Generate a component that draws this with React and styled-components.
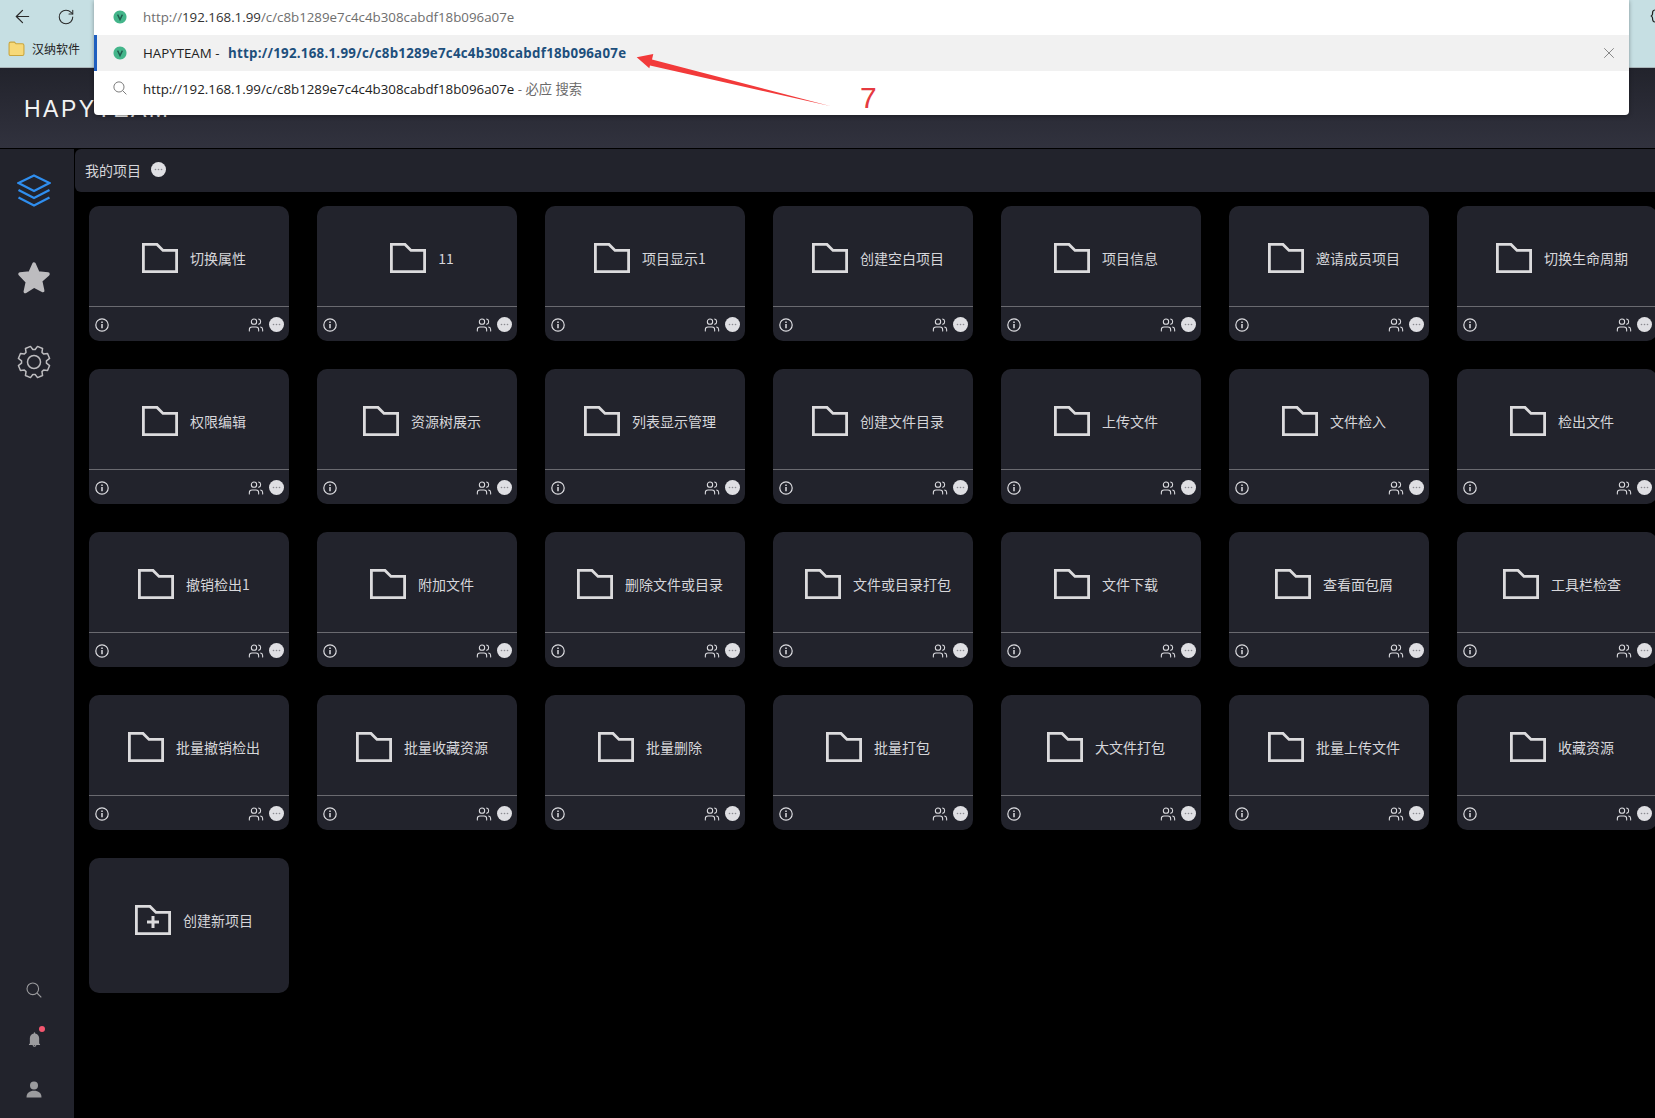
import React from "react";
import styled, { createGlobalStyle } from "styled-components";
import { ArrowLeft, RotateCw, Users, X } from "lucide-react";
import { AiFillBell } from "react-icons/ai";

const Global = createGlobalStyle`
html, body {
    margin: 0;
    padding: 0;
    background: #000;
    overflow: hidden;
}
* { box-sizing: border-box; }
`

const Page = styled.div`
position: relative;
width: 1655px;
height: 1118px;
overflow: hidden;
display: flex;
flex-direction: column;
background: #000;
font-family: "Noto Sans CJK SC", "Noto Sans", sans-serif;
`

// browser chrome
const BrowserBar = styled.div`
height: 68px;
flex-shrink: 0;
background: #c6dfe3;
border-bottom: 1px solid #a9b4b8;
display: flex;
flex-direction: column;
`
const NavRow = styled.div`
height: 33px;
display: flex;
align-items: center;
gap: 24px;
padding-left: 12px;
color: #2a2a2a;
`
const Bookmarks = styled.div`
height: 30px;
display: flex;
align-items: center;
gap: 7px;
padding-left: 8px;
font-size: 12px;
color: #222;
`
const CutIcon = styled.svg`
position: absolute;
right: 0;
top: 9px;
`

// omnibox dropdown
const Dropdown = styled.div`
position: absolute;
left: 94px;
top: 0;
width: 1535px;
height: 115px;
background: #fff;
border-radius: 0 0 4px 4px;
box-shadow: 0 1px 4px rgba(0, 0, 0, .35);
display: flex;
flex-direction: column;
font-family: "Open Sans", sans-serif;
font-size: 13.3px;
z-index: 2;
`
const Suggestion = styled.div`
height: ${p => p.$h}px;
padding: 0 0 ${p => p.$pb || 0}px 16px;
display: flex;
align-items: center;
gap: 16px;
color: ${p => p.$color || "#222"};
background: ${p => p.$active ? "#f1f1f1" : "transparent"};
border-left: ${p => p.$active ? "3px solid #1f5fbf" : "3px solid transparent"};
position: relative;
white-space: pre;
`
const Dark = styled.span`
color: #333;
`
const Strong = styled.span`
color: #1d4f7c;
font-weight: 700;
letter-spacing: .26px;
margin-left: 5px;
`
const Gray = styled.span`
color: #6a6a6a;
font-family: "Open Sans", "Noto Sans CJK SC", sans-serif;
`
const CloseBtn = styled.span`
position: absolute;
right: 11px;
top: 9px;
color: #666;
display: flex;
`
const Callout = styled.svg`
position: absolute;
left: 630px;
top: 50px;
z-index: 3;
`
const Seven = styled.span`
position: absolute;
left: 860px;
top: 79px;
font-family: "Liberation Sans", sans-serif;
font-size: 30px;
line-height: 38px;
color: #e53a40;
z-index: 3;
`

// app
const Header = styled.div`
height: 81px;
flex-shrink: 0;
background: linear-gradient(180deg, #22232c 0%, #31323e 100%);
border-bottom: 1px solid #000;
display: flex;
align-items: center;
padding: 0 0 0 24px;
`
const Brand = styled.div`
font-family: "Liberation Sans", sans-serif;
font-size: 23px;
letter-spacing: 2.5px;
color: #f2f2f2;
margin-top: 3px;
`
const Body = styled.div`
flex: 1;
display: flex;
min-height: 0;
`
const Sidebar = styled.div`
width: 74px;
flex-shrink: 0;
background: #22232c;
display: flex;
flex-direction: column;
align-items: center;
padding: 24px 6px 0 0;
`
const BigIcon = styled.div`
width: 34px;
height: 34px;
margin-top: ${p => p.$top || 0}px;
display: flex;
align-items: center;
justify-content: center;
`
const SmallIcons = styled.div`
margin-top: auto;
padding-bottom: 20px;
display: flex;
flex-direction: column;
align-items: center;
gap: 33px;
color: #9b9b9e;
`
const SmallIcon = styled.div`
position: relative;
width: 17px;
height: 17px;
display: flex;
align-items: center;
justify-content: center;
`
const RedDot = styled.span`
position: absolute;
right: -2px;
top: -5px;
width: 6px;
height: 6px;
border-radius: 50%;
background: #f4566f;
`
const Content = styled.div`
flex: 1;
min-width: 0;
`
const Toolbar = styled.div`
margin-left: 1px;
height: 43px;
padding: 0 0 2px 10px;
background: #22232c;
border-radius: 6px 0 0 6px;
display: flex;
align-items: center;
gap: 10px;
font-size: 14px;
color: #d6d6da;
`
const Grid = styled.div`
display: grid;
grid-template-columns: repeat(7, 200px);
column-gap: 28px;
row-gap: 28px;
padding: 14px 0 0 15px;
`
const Card = styled.div`
height: 135px;
background: #22232c;
border-radius: 10px;
display: flex;
flex-direction: column;
overflow: hidden;
`
const CardMain = styled.div`
height: ${p => p.$full ? "124px" : "101px"};
display: flex;
align-items: center;
justify-content: center;
gap: 12px;
padding: ${p => p.$full ? "0" : "4px"} 0 0 10px;
border-bottom: ${p => p.$full ? "none" : "1px solid #6a6a70"};
font-size: 14px;
color: #d6d6da;
white-space: nowrap;
`
const CardFoot = styled.div`
flex: 1;
display: flex;
align-items: center;
padding: 1px 5px 0 6px;
color: #dcdce0;
`
const FootRight = styled.div`
margin-left: auto;
display: flex;
align-items: center;
gap: 5px;
`

const Favicon = () => (
    <svg width="14" height="14" viewBox="0 0 14 14">
        <path d="M7 .5C11 .5 13.500 3.500 13.500 7S11 13.500 7 13.500 .5 10.500 .5 7 3 .5 7 .5Z" fill="#43b58a" />
        <path d="M4.600 4.600 7 9.600l2.400-5" fill="none" stroke="#1f5a4c" strokeWidth="1.400" />
    </svg>
)

const BookmarkFolder = () => (
    <svg width="17" height="17" viewBox="0 0 16 16">
        <path d="M1 3.500C1 2.600 1.600 2 2.500 2H6l1.600 1.600h5.900c.9 0 1.500.6 1.500 1.500v8c0 .9-.6 1.500-1.500 1.500h-11C1.600 14.600 1 14 1 13.100Z" fill="#f7d978" stroke="#c9a53c" strokeWidth="1" />
    </svg>
)

const SearchGlyph = ({ size = 16, color = "currentColor" }) => (
    <svg width={size} height={size} viewBox="0 0 16 16" fill="none" stroke={color} strokeWidth="1.100">
        <circle cx="6.800" cy="6.800" r="5.800" />
        <path d="M11 11l4.300 4.300" />
    </svg>
)

const Layers = () => (
    <svg width="34" height="33" viewBox="0 0 34 33" fill="none" stroke="#2f8eef" strokeWidth="2.200">
        <path d="M17 1.500 32.500 9 17 17 1.500 9Z" />
        <path d="M1.500 16 17 24 32.500 16" />
        <path d="M1.500 23.500 17 31.500 32.500 23.500" />
    </svg>
)

const Star = () => (
    <svg width="34" height="34" viewBox="0 0 34 34" fill="#bdbcbf" stroke="#bdbcbf" strokeWidth="3.500" strokeLinejoin="round">
        <path d="M17 3l4.100 9.100 9.900 1-7.400 6.700 2.100 9.700L17 25l-8.700 5.500 2.100-9.700L3 13.100l9.900-1Z" />
    </svg>
)

// eight teeth, computed so they stay even
const gearPath = () => {
    const cx = 17, cy = 17, fora = 16, dentro = 12.5
    const pontos = []
    for (let i = 0; i < 8; i++) {
        const a = (Math.PI / 4) * i + Math.PI / 8
        ;[[-0.3, dentro], [-0.17, fora], [0.17, fora], [0.3, dentro]].forEach(([d, r]) => {
            pontos.push(`${(cx + Math.cos(a + d) * r).toFixed(2)} ${(cy + Math.sin(a + d) * r).toFixed(2)}`)
        })
    }
    return "M" + pontos.join("L") + "Z"
}

const Gear = () => (
    <svg width="34" height="34" viewBox="0 0 34 34" fill="none" stroke="#bdbcbf" strokeWidth="1.500" strokeLinejoin="round">
        <path d={gearPath()} />
        <circle cx="17" cy="17" r="6.500" />
    </svg>
)

const UserGlyph = () => (
    <svg width="16" height="17" viewBox="0 0 16 17" fill="currentColor">
        <circle cx="8" cy="4.500" r="4" />
        <path d="M.5 16.500C.5 12 3.500 9.800 8 9.800s7.500 2.200 7.500 6.700Z" />
    </svg>
)

const Folder = () => (
    <svg width="36" height="30" viewBox="0 0 36 30" fill="none" stroke="#dcdbdd" strokeWidth="2.800">
        <path d="M1.400 1.400H15L21 7.400H34.600V28.600H1.400Z" />
    </svg>
)

const FolderPlus = () => (
    <svg width="36" height="30" viewBox="0 0 36 30" fill="none" stroke="#dcdbdd" strokeWidth="2.800">
        <path d="M1.400 1.400H15L21 7.400H34.600V28.600H1.400Z" />
        <path d="M18 11v12M12 17h12" strokeWidth="3" />
    </svg>
)

const Dots = ({ size = 15 }) => (
    <svg width={size} height={size} viewBox="0 0 15 15">
        <circle cx="7.500" cy="7.500" r="7.500" fill="#dfdfe3" />
        <circle cx="4.500" cy="7.500" r=".8" fill="#8a8a90" />
        <circle cx="7.500" cy="7.500" r=".8" fill="#8a8a90" />
        <circle cx="10.500" cy="7.500" r=".8" fill="#8a8a90" />
    </svg>
)

const InfoGlyph = () => (
    <svg width="14" height="14" viewBox="0 0 14 14" fill="none" stroke="#dcdce0">
        <circle cx="7" cy="7" r="6.200" strokeWidth="1.200" />
        <path d="M7 6v4.200" strokeWidth="1.500" />
        <path d="M7 3.400v1.500" strokeWidth="1.500" />
    </svg>
)

const projetos = [
    "切换属性", "11", "项目显示1", "创建空白项目", "项目信息", "邀请成员项目", "切换生命周期",
    "权限编辑", "资源树展示", "列表显示管理", "创建文件目录", "上传文件", "文件检入", "检出文件",
    "撤销检出1", "附加文件", "删除文件或目录", "文件或目录打包", "文件下载", "查看面包屑", "工具栏检查",
    "批量撤销检出", "批量收藏资源", "批量删除", "批量打包", "大文件打包", "批量上传文件", "收藏资源",
]

export default function App() {
    return (
        <Page>
            <Global />
            <BrowserBar>
                <NavRow>
                    <ArrowLeft size={21} strokeWidth={1.4} />
                    <RotateCw size={18} strokeWidth={1.4} />
                </NavRow>
                <Bookmarks>
                    <BookmarkFolder />
                    <span>汉纳软件</span>
                </Bookmarks>
                <CutIcon width="5" height="14" viewBox="0 0 5 14" fill="none" stroke="#222" strokeWidth="1.200">
                    <path d="M5 1C2.500 1 2.500 3 2.500 5 2.500 6 1.500 7 .7 7 1.500 7 2.500 8 2.500 9 2.500 11 2.500 13 5 13" />
                </CutIcon>
            </BrowserBar>

            <Dropdown>
                <Suggestion $h={35} $pb={2} $color="#6e6e6e">
                    <Favicon />
                    <span>http://<Dark>192.168.1.99</Dark>/c/c8b1289e7c4c4b308cabdf18b096a07e</span>
                </Suggestion>
                <Suggestion $h={36} $active>
                    <Favicon />
                    <span>HAPYTEAM - <Strong>http://192.168.1.99/c/c8b1289e7c4c4b308cabdf18b096a07e</Strong></span>
                    <CloseBtn><X size={18} strokeWidth={1} /></CloseBtn>
                </Suggestion>
                <Suggestion $h={44} $pb={10}>
                    <SearchGlyph size={14} color="#777" />
                    <span>http://192.168.1.99/c/c8b1289e7c4c4b308cabdf18b096a07e<Gray> - 必应 搜索</Gray></span>
                </Suggestion>
            </Dropdown>

            <Callout width="205" height="60" viewBox="0 0 205 60">
                <path d="M6.700 7.300 23.300 4 22 9.500 200 56 20 15.500 19.300 18.300Z" fill="#f23a3a" />
            </Callout>
            <Seven>7</Seven>

            <Header>
                <Brand>HAPYTEAM</Brand>
            </Header>

            <Body>
                <Sidebar>
                    <BigIcon><Layers /></BigIcon>
                    <BigIcon $top={54}><Star /></BigIcon>
                    <BigIcon $top={50}><Gear /></BigIcon>
                    <SmallIcons>
                        <SmallIcon><SearchGlyph /></SmallIcon>
                        <SmallIcon>
                            <AiFillBell size={17} />
                            <RedDot />
                        </SmallIcon>
                        <SmallIcon><UserGlyph /></SmallIcon>
                    </SmallIcons>
                </Sidebar>

                <Content>
                    <Toolbar>
                        <span>我的项目</span>
                        <Dots />
                    </Toolbar>
                    <Grid>
                        {projetos.map(nome => (
                            <Card key={nome}>
                                <CardMain>
                                    <Folder />
                                    <span>{nome}</span>
                                </CardMain>
                                <CardFoot>
                                    <InfoGlyph />
                                    <FootRight>
                                        <Users size={16} strokeWidth={1.6} />
                                        <Dots />
                                    </FootRight>
                                </CardFoot>
                            </Card>
                        ))}
                        <Card>
                            <CardMain $full>
                                <FolderPlus />
                                <span>创建新项目</span>
                            </CardMain>
                        </Card>
                    </Grid>
                </Content>
            </Body>
        </Page>
    )
}
